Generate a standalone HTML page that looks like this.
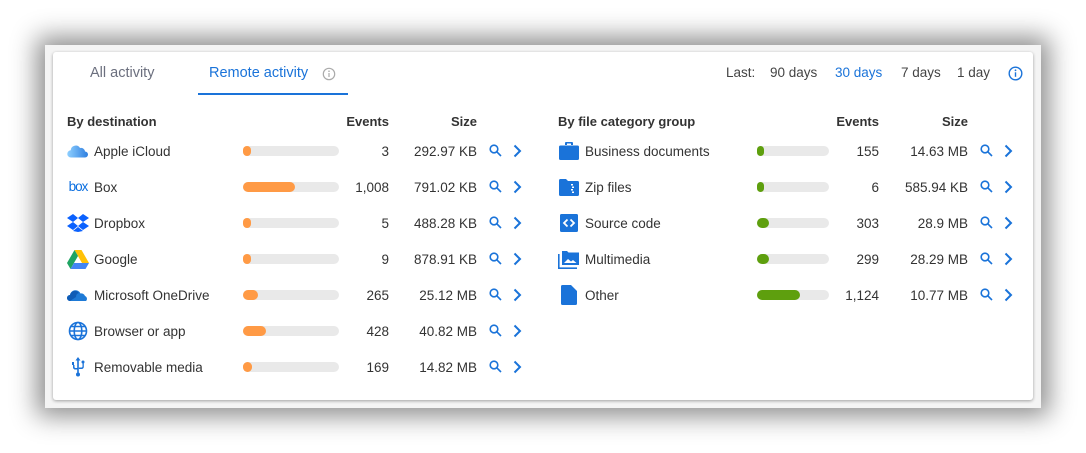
<!DOCTYPE html>
<html><head><meta charset="utf-8"><style>
*{margin:0;padding:0;box-sizing:border-box}
body{width:1086px;height:453px;background:#fff;font-family:"Liberation Sans",sans-serif;color:#333;position:relative;overflow:hidden}
.frame{position:absolute;left:45px;top:45px;width:996px;height:363px;background:#f4f4f4;box-shadow:0 0 24px 8px rgba(0,0,0,.45)}
.card{position:absolute;left:53px;top:52px;width:980px;height:348px;background:#fff;border-radius:3px;box-shadow:0 1px 3px rgba(0,0,0,.35)}
.abs{position:absolute;white-space:nowrap;font-size:13.5px;line-height:16px}
.blue{color:#1a73d9}
.hdr{font-weight:bold;font-size:13px;color:#333}
.track{position:absolute;height:10px;border-radius:5px;background:#e9e9e9}
.fill{height:10px;border-radius:5px}
.or{background:#ff9a45}.gr{background:#5e9f0e}
.r{text-align:right}
svg{position:absolute}
</style></head><body>
<div class="frame"></div>
<div class="card"></div>

<div class="abs" style="left:90px;top:65px;font-size:14.5px;color:#6b6f7e">All activity</div>
<div class="abs blue" style="left:209px;top:65px;font-size:14.5px">Remote activity</div>
<svg style="left:322px;top:67px" width="14" height="14" viewBox="0 0 14 14"><circle cx="7" cy="7" r="5.7" fill="none" stroke="#aaa" stroke-width="1.2"/><rect x="6.4" y="6" width="1.2" height="4" fill="#aaa"/><circle cx="7" cy="4.2" r=".8" fill="#aaa"/></svg>
<div style="position:absolute;left:198px;top:93px;width:150px;height:1.5px;background:#1a73d9"></div>

<div class="abs" style="left:726px;top:65px;color:#444">Last:</div>
<div class="abs" style="left:770px;top:65px;color:#444">90 days</div>
<div class="abs blue" style="left:835px;top:65px">30 days</div>
<div class="abs" style="left:901px;top:65px;color:#444">7 days</div>
<div class="abs" style="left:957px;top:65px;color:#444">1 day</div>
<svg style="left:1008px;top:66px" width="15" height="15" viewBox="0 0 15 15"><circle cx="7.5" cy="7.5" r="6.3" fill="none" stroke="#1a73d9" stroke-width="1.4"/><rect x="6.8" y="6.3" width="1.4" height="4.5" fill="#1a73d9"/><circle cx="7.5" cy="4.3" r=".9" fill="#1a73d9"/></svg>

<div id="c"></div>
<script>
const L=[["Apple iCloud",8,"3","292.97 KB","icloud"],["Box",52,"1,008","791.02 KB","box"],["Dropbox",8,"5","488.28 KB","dropbox"],["Google",8,"9","878.91 KB","google"],["Microsoft OneDrive",15,"265","25.12 MB","onedrive"],["Browser or app",23,"428","40.82 MB","globe"],["Removable media",9,"169","14.82 MB","usb"]];
const R=[["Business documents",7,"155","14.63 MB","brief"],["Zip files",7,"6","585.94 KB","zip"],["Source code",12,"303","28.9 MB","code"],["Multimedia",12,"299","28.29 MB","media"],["Other",43,"1,124","10.77 MB","file"]];
const B="#1a73d9";
const I={
icloud:`<svg width="22" height="14" viewBox="0 0 22 14"><defs><linearGradient id="g1" x1="0" x2="1"><stop offset="0" stop-color="#8fd0ff"/><stop offset="1" stop-color="#2f7fe0"/></linearGradient></defs><path d="M4 13.5a3.6 3.6 0 0 1-.3-7.2A5 5 0 0 1 13 4a4 4 0 0 1 5 3.5 3 3 0 0 1 0 6z" fill="url(#g1)"/></svg>`,
box:`<div style="font:13.5px 'Liberation Sans';color:#0b6fe0;letter-spacing:-1px;line-height:14px">box</div>`,
dropbox:`<svg width="22" height="18" viewBox="0 0 22 18"><g fill="#0a61fe"><path d="M6 0 0 4l6 4 5-4z"/><path d="M16 0l-5 4 5 4 6-4z"/><path d="M0 12l6 4 5-4-5-4z"/><path d="M22 12l-6-4-5 4 5 4z"/><path d="M6 17l5 1 5-1-5-4z"/></g></svg>`,
google:`<svg width="22" height="19" viewBox="0 0 22 19"><path d="M7.5 0h7l7.5 13h-7z" fill="#ffc107"/><path d="M7.5 0 0 13l3.5 6L11 6z" fill="#1fa463"/><path d="M3.5 19h15l3.5-6H7z" fill="#4285f4"/></svg>`,
onedrive:`<svg width="22" height="14" viewBox="0 0 22 14"><path d="M3 13a3 3 0 0 1 0-6 5.5 5.5 0 0 1 10.5-1.5A4 4 0 0 1 18 8a3 3 0 0 1 1 5z" fill="#1e7ad6"/><path d="M3 13a3 3 0 0 1 0-6 5 5 0 0 1 9-2 4 4 0 0 0-3 4" fill="#0f5cb6"/></svg>`,
globe:`<svg width="20" height="20" viewBox="0 0 20 20" fill="none" stroke="${B}" stroke-width="1.6"><circle cx="10" cy="10" r="8.5"/><ellipse cx="10" cy="10" rx="3.8" ry="8.5"/><path d="M1.5 10h17M3 5.5h14M3 14.5h14"/></svg>`,
usb:`<svg width="14" height="20" viewBox="0 0 14 20" fill="${B}"><path d="M7 0l2.5 3.5h-1.7v12.5h-1.6V3.5H4.5z"/><rect x="1" y="5" width="2" height="3"/><path d="M2 8v2.5c0 1 1 2 2 2h2.5v-1.5H4.5a1 1 0 0 1-1-1V8z"/><path d="M11.5 6v3.5a1 1 0 0 1-1 1H7.8V12h3c1 0 2-1 2-2V6z"/><circle cx="12" cy="5" r="1.5"/><circle cx="7" cy="17.5" r="2"/></svg>`,
brief:`<svg width="20" height="18" viewBox="0 0 20 18" fill="${B}"><path d="M7 0h6a1 1 0 0 1 1 1v2h-2V1.5H8V3H6V1a1 1 0 0 1 1-1z"/><rect x="0" y="3.5" width="20" height="14.5" rx="1.5"/></svg>`,
zip:`<svg width="20" height="17" viewBox="0 0 20 17"><path d="M0 1.5A1.5 1.5 0 0 1 1.5 0H7l2 2h9.5A1.5 1.5 0 0 1 20 3.5v12A1.5 1.5 0 0 1 18.5 17h-17A1.5 1.5 0 0 1 0 15.5z" fill="${B}"/><path d="M12 5h2v1.5h-2zM13 7.5h2V9h-2zM12 10h2v1.5h-2zM13 12.5h2V14h-2z" fill="#fff"/></svg>`,
code:`<svg width="18" height="18" viewBox="0 0 18 18"><rect width="18" height="18" rx="1.5" fill="${B}"/><path d="M7.5 5.5 4 9l3.5 3.5M10.5 5.5 14 9l-3.5 3.5" fill="none" stroke="#fff" stroke-width="1.8"/></svg>`,
media:`<svg width="22" height="19" viewBox="0 0 22 19"><path d="M4 1h5l1.5 1.5H21v12.5H4z" fill="${B}"/><path d="M.8 4v14.2H19" fill="none" stroke="${B}" stroke-width="1.6"/><path d="M6 13l4-4 3 2.5 2-1.5 3.5 3z" fill="#fff"/></svg>`,
file:`<svg width="16" height="20" viewBox="0 0 16 20"><path d="M1.5 0H10l6 6v12.5a1.5 1.5 0 0 1-1.5 1.5h-13A1.5 1.5 0 0 1 0 18.5v-17A1.5 1.5 0 0 1 1.5 0z" fill="${B}"/></svg>`
};
const icon=(x,y)=>`<svg style="left:${x}px;top:${y}px" width="13" height="13" viewBox="0 0 13 13" fill="none" stroke="${B}" stroke-width="1.6"><circle cx="5" cy="5" r="3.8"/><path d="M7.8 7.8 12 12"/></svg>`;
const chev=(x,y)=>`<svg style="left:${x}px;top:${y}px" width="10" height="14" viewBox="0 0 10 14" fill="none" stroke="${B}" stroke-width="2"><path d="M2.5 1.5 8 7l-5.5 5.5"/></svg>`;
let h="";
function sect(rows,o,title,cls){
 h+=`<div class="abs hdr" style="left:${o.x+1}px;top:114px">${title}</div><div class="abs hdr r" style="left:${o.ev-60}px;width:60px;top:114px">Events</div><div class="abs hdr r" style="left:${o.sz-60}px;width:60px;top:114px">Size</div>`;
 rows.forEach((r,i)=>{const cy=151+i*36;
  h+=`<div style="position:absolute;left:${o.x}px;top:${cy-11}px;width:24px;height:22px;display:flex;align-items:center;justify-content:center">${I[r[4]].replace('<svg','<svg style="position:static"')}</div>`;
  h+=`<div class="abs" style="left:${o.nx}px;top:${cy-7}px">${r[0]}</div>`;
  h+=`<div class="track" style="left:${o.bx}px;top:${cy-5}px;width:${o.bw}px"><div class="fill ${cls}" style="width:${r[1]}px"></div></div>`;
  h+=`<div class="abs r" style="left:${o.ev-80}px;width:80px;top:${cy-7}px">${r[2]}</div>`;
  h+=`<div class="abs r" style="left:${o.sz-100}px;width:100px;top:${cy-7}px">${r[3]}</div>`;
  h+=icon(o.sz+12,cy-7)+chev(o.sz+35,cy-7);
 });
}
sect(L,{x:66,nx:94,bx:243,bw:96,ev:389,sz:477},"By destination","or");
sect(R,{x:557,nx:585,bx:757,bw:72,ev:879,sz:968},"By file category group","gr");
document.getElementById("c").innerHTML=h;
</script>
</body></html>
